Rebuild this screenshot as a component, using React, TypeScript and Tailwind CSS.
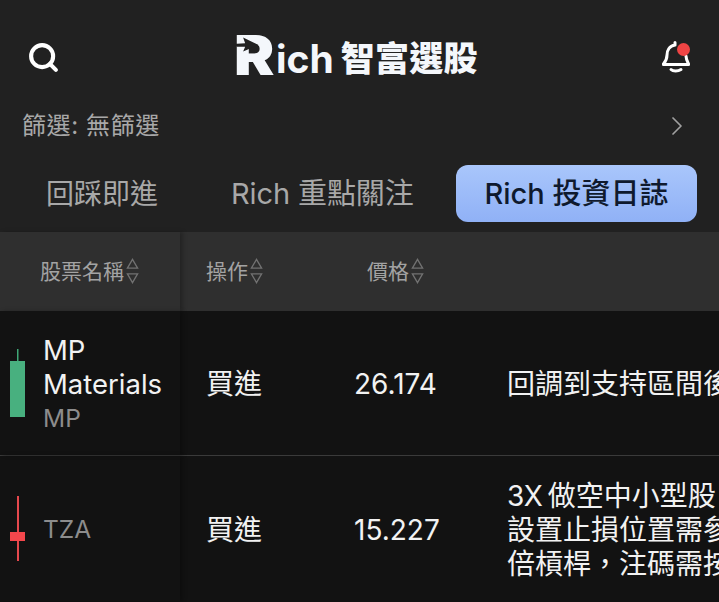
import { ChevronRight, Search } from "lucide-react";

const sans = "font-['Inter','Noto_Sans_CJK_TC',sans-serif]";

function SortIcon() {
  return (
    <svg width="13" height="28" viewBox="0 0 14 28" fill="none" stroke="#727272" strokeWidth="1.4" className="-mt-[1px] ml-[2px] shrink-0">
      <path d="M7 1.5 L12.5 11 H1.5 Z" />
      <path d="M1.5 17 H12.5 L7 26.5 Z" />
    </svg>
  );
}

function Candle({ kind }: { kind: "up" | "down" }) {
  if (kind === "up") {
    return (
      <svg width="16" height="72" viewBox="0 0 16 72" className="shrink-0">
        <rect x="7" y="2" width="1.5" height="14" fill="#3fa776" />
        <rect x="0" y="14" width="15" height="56" fill="#48b07f" />
      </svg>
    );
  }
  return (
    <svg width="16" height="66" viewBox="0 0 16 66" className="shrink-0">
      <rect x="7" y="0" width="2" height="65" fill="#e5484d" />
      <rect x="0" y="36" width="15" height="9" fill="#f4474c" />
    </svg>
  );
}

function HeaderCell({ label, className }: { label: string; className: string }) {
  return (
    <div className={`flex items-center ${className}`}>
      <span className="text-[21px] text-[#a3a3a3]">{label}</span>
      <SortIcon />
    </div>
  );
}

function Row({
  candle,
  name,
  ticker,
  price,
  lines,
  border,
}: {
  candle: "up" | "down";
  name?: string[];
  ticker: string;
  price: string;
  lines: string[];
  border?: boolean;
}) {
  return (
    <div className={`flex h-[145px] items-stretch ${border ? "border-b border-[#3a3a3a]" : ""}`}>
      <div className="flex w-[180px] shrink-0 items-center gap-[17px] pl-[10px] shadow-[3px_0_4px_rgba(0,0,0,0.25)]">
        <Candle kind={candle} />
        <div className={`flex flex-col text-[27.5px] leading-[34px] ${name ? "pt-[2px]" : ""}`}>
          {name?.map((n) => (
            <span key={n} className="text-[#f2f2f2]">
              {n}
            </span>
          ))}
          <span className="text-[24.5px] text-[#8c8c8c]">{ticker}</span>
        </div>
      </div>
      <div className="flex w-[147px] shrink-0 items-center pt-[2px] pl-[26px] text-[28px] text-[#f2f2f2]">買進</div>
      <div className="flex w-[181px] shrink-0 items-center pt-[2px] pl-[27px] text-[28px] text-[#f2f2f2]">{price}</div>
      <div className="-ml-[1px] flex flex-col justify-center overflow-hidden pt-[2px] text-[28px] leading-[34px] whitespace-nowrap text-[#f2f2f2] [word-spacing:-3px]">
        {lines.map((l) => (
          <span key={l}>{l}</span>
        ))}
      </div>
    </div>
  );
}

export default function App() {
  return (
    <div className={`flex h-[602px] w-[719px] flex-col overflow-hidden bg-[#212121] ${sans}`}>
      <div className="flex h-[108px] items-center justify-between pt-[6px] pr-[29px] pl-[27px]">
        <Search size={33} strokeWidth={3} className="text-white" />
        <div className="mr-[10px] flex items-end text-[#f4f7fb]">
          <span className="relative mb-[4px] inline-block origin-left scale-x-110 text-[55px] leading-[48px] font-black">
            R
            <svg width="26" height="18" viewBox="0 0 28 18" className="absolute top-[5px] left-[-1px]">
              <path d="M0 8 L12 7 L10 1 L25 9 L10 16 L12 11 L4 11 Z" fill="#212121" />
            </svg>
          </span>
          <span className="mr-[7px] ml-[5px] text-[39px] leading-[48px] font-bold">ich</span>
          <span className="text-[34px] leading-[48px] font-black tracking-[0.25px]">智富選股</span>
        </div>
        <div className="relative h-[32px] w-[28px]">
          <svg width="28" height="32" viewBox="0 0 28 32" fill="none" stroke="white" strokeWidth="3" strokeLinecap="round">
            <path d="M13 1.5 V4 M13 4 C7 5 5 10 5 14 C5 18 4 20 1.5 23" />
            <path d="M24 15 C24 18 25 20 26.5 23" />
            <path d="M1.5 23.5 H26.5" />
            <path d="M9 28.5 C11 30.5 16 30.5 19 28.5" />
          </svg>
          <span className="absolute top-[2px] left-[15px] h-[13px] w-[13px] rounded-full bg-[#ef4444]" />
        </div>
      </div>

      <div className="flex h-[36px] items-center justify-between pr-[26px] pl-[22px]">
        <span className="text-[24px] tracking-[0.6px] text-[#a8a8a8]">篩選: 無篩選</span>
        <ChevronRight size={32} strokeWidth={1.3} className="text-[#a0a0a0]" />
      </div>

      <div className="flex h-[88px] items-center pt-[21px] pr-[22px] pb-[10px]">
        <span className="w-[185px] pl-[46px] text-[28px] text-[#a8a8a8]">回踩即進</span>
        <span className="ml-[46px] w-[225px] text-[29px] tracking-[-0.1px] text-[#a8a8a8]">Rich 重點關注</span>
        <div className="flex h-[57px] w-[241px] items-center justify-center rounded-[12px] bg-gradient-to-b from-[#a9c6fb] to-[#90b1f6] text-[29px] font-medium text-[#0f1a2e]">
          Rich 投資日誌
        </div>
      </div>

      <div className="flex h-[79px] shrink-0 items-center bg-[#2f2f2f]">
        <HeaderCell label="股票名稱" className="h-full w-[180px] shrink-0 pl-[40px] shadow-[3px_0_4px_rgba(0,0,0,0.25)]" />
        <HeaderCell label="操作" className="w-[160px] shrink-0 pl-[26px]" />
        <HeaderCell label="價格" className="pl-[27px]" />
      </div>

      <div className="flex-1 bg-[#121212]">
        <Row candle="up" name={["MP", "Materials"]} ticker="MP" price="26.174" lines={["回調到支持區間後"]} border />
        <Row candle="down" ticker="TZA" price="15.227" lines={["3X 做空中小型股", "設置止損位置需參", "倍槓桿，注碼需按"]} />
      </div>
    </div>
  );
}
